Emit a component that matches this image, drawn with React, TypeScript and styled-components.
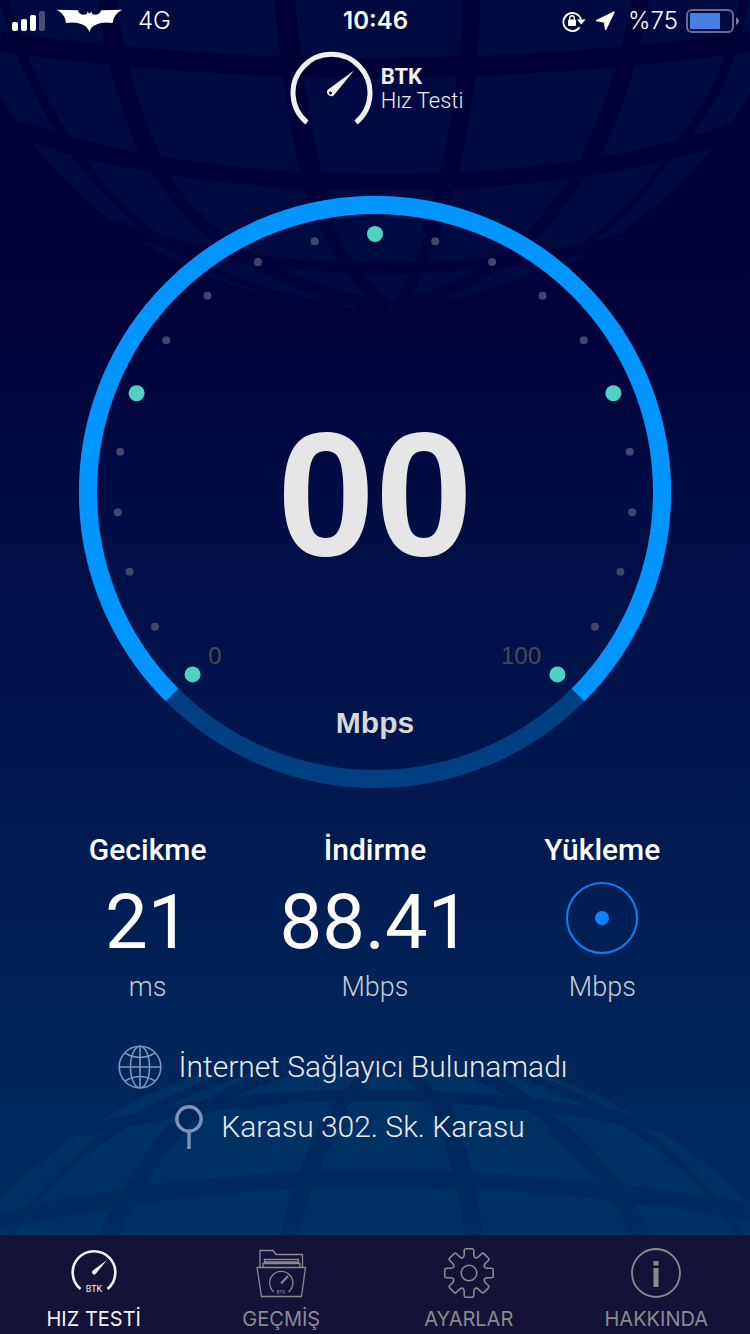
import React from "react";
import styled, { createGlobalStyle } from "styled-components";

const GlobalStyle = createGlobalStyle`
  * { box-sizing: border-box; }
  body {
    margin: 0;
    background: #000033;
    color: #fff;
    font-family: Roboto, "Liberation Sans", sans-serif;
  }
`;

const Page = styled.div`
  position: relative;
  display: flex;
  flex-direction: column;
  min-height: 100vh;
  overflow: hidden;
  background: linear-gradient(180deg, #000034 0%, #00023a 25%, #000e46 40%, #00194f 60%, #00265a 80%, #002e62 100%);
`;

const GlobeTop = styled.svg`
  position: absolute;
  top: 0;
  left: 50%;
  width: 750px;
  height: 320px;
  margin-left: -375px;
`;

const GlobeBottom = styled.svg`
  position: absolute;
  bottom: 99px;
  left: 50%;
  width: 750px;
  height: 195px;
  margin-left: -375px;
`;

const StatusBar = styled.header`
  position: relative;
  display: grid;
  grid-template-columns: 1fr auto 1fr;
  align-items: center;
  height: 42px;
  padding: 0 11px 0 12px;
  font-family: Inter, "Liberation Sans", sans-serif;
  font-size: 24px;
  line-height: 42px;
`;

const StatusGroup = styled.div<{ $end?: boolean }>`
  display: flex;
  align-items: center;
  justify-content: ${(p) => (p.$end ? "flex-end" : "flex-start")};
  gap: ${(p) => (p.$end ? "8px" : "12px")};
`;

const StatusText = styled.span`
  padding-left: 4px;
  font-weight: 300;
`;

const Clock = styled.time`
  font-weight: 600;
`;

const Brand = styled.div`
  position: relative;
  display: flex;
  justify-content: center;
  gap: 8px;
  margin-top: 9px;
  padding-left: 3px;
`;

const BrandName = styled.h1`
  display: flex;
  flex-direction: column;
  margin: 14px 0 0;
  font-size: 22px;
  line-height: 24px;
  font-weight: 300;
  color: #f0f0f0;
`;

const BrandStrong = styled.strong`
  font-weight: 700;
`;

const Main = styled.main`
  position: relative;
  flex: 1;
  display: flex;
  flex-direction: column;
`;

const Gauge = styled.section`
  display: grid;
  justify-items: center;
  width: calc(100% - 32px);
  max-width: 592px;
  margin: 69px auto 0;

  > * { grid-area: 1 / 1; }
`;

const Dial = styled.svg`
  width: 100%;
  height: auto;
`;

const Readout = styled.div`
  display: flex;
  flex-direction: column;
  align-items: center;
  align-self: end;
  gap: 132px;
  padding-bottom: 46px;
  font-family: "Liberation Sans Narrow", "Liberation Sans", sans-serif;
  font-weight: 700;
`;

const Speed = styled.output`
  font-size: 176px;
  line-height: 156px;
  color: #e6e6e6;
`;

const SpeedUnit = styled.span`
  font-size: 30px;
  line-height: 38px;
  color: #d8d8d8;
`;

const Metrics = styled.section`
  display: grid;
  grid-template-columns: repeat(3, 1fr);
  padding: 42px 34px 0;
`;

const Metric = styled.div`
  display: flex;
  flex-direction: column;
  align-items: center;
`;

const MetricLabel = styled.h2`
  margin: 0;
  font-size: 30px;
  line-height: 40px;
  font-weight: 500;
`;

const MetricValue = styled.div`
  display: flex;
  align-items: center;
  height: 80px;
  margin: 8px 0 11px;
`;

const Figure = styled.span`
  padding-top: 8px;
  font-size: 76px;
  line-height: 80px;
  font-weight: 400;
`;

const Pending = styled.span`
  display: grid;
  place-items: center;
  width: 72px;
  height: 72px;
  border: 2px solid #0a80ff;
  border-radius: 50%;

  &::after {
    content: "";
    width: 14px;
    height: 14px;
    border-radius: 50%;
    background: #0a84ff;
  }
`;

const MetricUnit = styled.span`
  font-size: 27px;
  line-height: 36px;
  font-weight: 300;
  color: #c8ccd2;
`;

const Details = styled.section`
  display: flex;
  flex-direction: column;
  align-items: center;
  gap: 16px;
  padding: 40px 64px 86px 0;
`;

const Detail = styled.p`
  display: flex;
  align-items: center;
  gap: 16px;
  margin: 0;
  font-size: 30px;
  line-height: 44px;
  font-weight: 300;
  color: #e8eaee;
`;

const TabBar = styled.nav`
  position: relative;
  display: grid;
  grid-template-columns: repeat(4, 1fr);
  border-top: 1px solid #10183c;
  background: #141238;
`;

const Tab = styled.button<{ $active?: boolean }>`
  display: flex;
  flex-direction: column;
  align-items: center;
  gap: 9px;
  padding: 12px 0 3px;
  border: 0;
  background: none;
  color: ${(p) => (p.$active ? "#f2f2f2" : "#8a8a8c")};
  font-family: Inter, "Liberation Sans", sans-serif;
  font-size: 20px;
  line-height: 24px;
  font-weight: 400;
  cursor: pointer;
`;

const TAU = Math.PI * 2;

const ticks = Array.from({ length: 21 }, (_, i) => {
  const angle = ((-135 + i * 13.5) / 360) * TAU;
  return {
    x: 296 + 258 * Math.sin(angle),
    y: 296 - 258 * Math.cos(angle),
    major: i % 5 === 0,
  };
});

const rotated = (x: number, y: number, a: number) =>
  `${(25 + x * Math.cos(a) - y * Math.sin(a)).toFixed(2)} ${(25 + x * Math.sin(a) + y * Math.cos(a)).toFixed(2)}`;

/* One tooth per eighth of a turn; corners and the valleys between teeth are rounded. */
const gearPath = Array.from({ length: 8 }, (_, k) => {
  const a = (k * TAU) / 8;
  const b = ((k + 1) * TAU) / 8;
  const p = (x: number, y: number) => rotated(x, y, a);
  return (
    `${k === 0 ? "M" : "L"}${p(-4.8, -18)} L${p(-4.8, -22.5)} Q${p(-4.8, -24.2)} ${p(-3.2, -24.2)}` +
    `L${p(3.2, -24.2)} Q${p(4.8, -24.2)} ${p(4.8, -22.5)} L${p(4.8, -18)}` +
    `C${p(5.2, -15)} ${rotated(-5.2, -15, b)} ${rotated(-4.8, -18, b)}`
  );
}).join("") + "Z";

function SpeedDial() {
  return (
    <Dial viewBox="0 0 592 592" aria-hidden="true">
      <circle cx="296" cy="296" r="287" fill="none" stroke="#003f82" strokeWidth="18" />
      <path d="M93 499 A287 287 0 1 1 499 499" fill="none" stroke="#0095ff" strokeWidth="18" />
      {ticks.map((t, i) => (
        <circle key={i} cx={t.x} cy={t.y} r={t.major ? 8 : 4} fill={t.major ? "#50d2c2" : "#41466a"} />
      ))}
      <g fill="#48484f" fontFamily="'Liberation Sans', sans-serif" fontSize="24" textAnchor="middle">
        <text x="136" y="468">0</text>
        <text x="442" y="468">100</text>
      </g>
    </Dial>
  );
}

export default function App() {
  return (
    <>
      <GlobalStyle />
      <Page>
        <GlobeTop viewBox="0 0 750 320" aria-hidden="true">
          <mask id="grid-top">
            <circle cx="374" cy="-126" r="435" fill="#fff" />
            <g fill="none" stroke="#000">
              <path strokeWidth="20" d="M0 42 Q375 94 750 42" />
              <path strokeWidth="17" d="M18 128 C200 200 560 200 735 130" />
              <path strokeWidth="11" d="M115 225 C240 280 500 280 620 238" />
              <path strokeWidth="21" d="M285 0 Q294 120 324 222" />
              <path strokeWidth="13" d="M321 210 Q340 268 388 308" />
              <path strokeWidth="18" d="M471 0 Q470 120 430 236" />
              <path strokeWidth="11" d="M434 224 Q418 282 396 308" />
              <path strokeWidth="19" d="M107 0 Q118 86 154 164" />
              <path strokeWidth="12" d="M150 155 Q210 274 388 308" />
              <path strokeWidth="18" d="M640 0 Q625 90 588 160" />
              <path strokeWidth="12" d="M591 152 Q530 274 396 308" />
              <path strokeWidth="9" d="M4 0 Q30 100 100 185" />
              <path strokeWidth="6" d="M96 180 Q190 290 345 306" />
              <path strokeWidth="9" d="M744 0 Q730 90 670 155" />
              <path strokeWidth="6" d="M673 151 Q590 280 430 306" />
            </g>
          </mask>
          <rect width="750" height="320" fill="#000a40" mask="url(#grid-top)" />
        </GlobeTop>
        <GlobeBottom viewBox="0 0 750 195" aria-hidden="true">
          <mask id="grid-bottom">
            <circle cx="372" cy="534" r="529" fill="#fff" />
            <rect width="750" height="34" fill="#000" />
            <g fill="none" stroke="#000">
              <path strokeWidth="12" d="M80 92 Q220 55 370 55 T670 88" />
              <path strokeWidth="17" d="M0 181 Q180 139 375 139 T750 172" />
              <path strokeWidth="12" d="M372 28 Q350 52 338 70" />
              <path strokeWidth="18" d="M340 66 Q308 120 289 196" />
              <path strokeWidth="11" d="M400 28 Q430 50 442 72" />
              <path strokeWidth="18" d="M441 66 Q464 120 474 196" />
              <path strokeWidth="12" d="M300 28 Q220 46 172 94" />
              <path strokeWidth="18" d="M176 88 Q140 130 108 196" />
              <path strokeWidth="12" d="M460 28 Q530 52 562 94" />
              <path strokeWidth="18" d="M557 87 Q616 140 641 196" />
              <path strokeWidth="8" d="M256 28 Q84 78 8 196" />
              <path strokeWidth="8" d="M500 28 Q668 78 740 196" />
            </g>
          </mask>
          <rect width="750" height="195" fill="#003163" mask="url(#grid-bottom)" />
        </GlobeBottom>

        <StatusBar>
          <StatusGroup>
            <svg width="33" height="20" viewBox="0 0 33 20" fill="#fff" role="img" aria-label="Sinyal">
              <rect y="11" width="6" height="9" rx="2" />
              <rect x="9" y="8" width="6" height="12" rx="2" />
              <rect x="18" y="4" width="6" height="16" rx="2" />
              <rect x="27" width="6" height="20" rx="2" opacity="0.28" />
            </svg>
            <svg width="65" height="24" viewBox="170 28 195 72" fill="#fff" aria-hidden="true">
              <path d="M170 30 L233 32 Q235 44 248 45 Q258 45 260 42 L262 35 L265 41 L270 41 L273 35 L275 42 Q277 45 287 45 Q300 44 302 32 L365 30 Q338 46 337 70 Q305 66 290 74 Q272 80 267 98 Q262 80 244 74 Q228 66 197 70 Q196 46 170 30Z" />
            </svg>
            <StatusText>4G</StatusText>
          </StatusGroup>
          <Clock>10:46</Clock>
          <StatusGroup $end>
            <svg width="24" height="22" viewBox="0 0 24 22" fill="#fff" aria-hidden="true">
              <path d="M17.6 17.4 A9 9 0 1 1 19 9.500" fill="none" stroke="#fff" strokeWidth="1.8" />
              <path d="M15 9.5 H23.600 L19.400 14.500Z" />
              <rect x="6" y="9.5" width="8" height="6.5" rx="1" />
              <path d="M7.7 10 V8 a2.3 2.3 0 0 1 4.6 0 V10" fill="none" stroke="#fff" strokeWidth="1.4" />
            </svg>
            <svg width="22" height="20" viewBox="0 0 22 20" fill="#fff" stroke="#fff" strokeLinejoin="round" aria-hidden="true">
              <path d="M20 1.2 L2.600 9.6 L10.6 11 L11.6 18.4Z" strokeWidth="1.4" />
            </svg>
            <StatusText>%75</StatusText>
            <svg width="53" height="24" viewBox="0 0 53 24" role="img" aria-label="Pil">
              <rect x="1" y="1" width="46" height="22" rx="5" fill="none" stroke="#6a6a8c" strokeWidth="2" />
              <rect x="4" y="4" width="30" height="16" rx="1" fill="#4880e2" />
              <path d="M50 8 Q53 10 53 12 T50 16Z" fill="#7b7b98" />
            </svg>
          </StatusGroup>
        </StatusBar>

        <Brand>
          <svg width="83" height="76" viewBox="0 0 83 76" fill="#f0f0f0" aria-hidden="true">
            <path d="M17 71.500 A38.500 38.500 0 1 1 66 71.500" fill="none" stroke="#f0f0f0" strokeWidth="5" />
            <path
              fillRule="evenodd"
              d="M64 19.500 L44.500 43.500 A4 4 0 1 1 38 38.500 Z M40 40.500 a1.500 1.500 0 1 0 1.800 2.200 a1.500 1.500 0 0 0 -1.800 -2.200Z"
            />
          </svg>
          <BrandName>
            <BrandStrong>BTK</BrandStrong>
            <span>Hız Testi</span>
          </BrandName>
        </Brand>

        <Main>
          <Gauge>
            <SpeedDial />
            <Readout>
              <Speed>00</Speed>
              <SpeedUnit>Mbps</SpeedUnit>
            </Readout>
          </Gauge>

          <Metrics>
            <Metric>
              <MetricLabel>Gecikme</MetricLabel>
              <MetricValue><Figure>21</Figure></MetricValue>
              <MetricUnit>ms</MetricUnit>
            </Metric>
            <Metric>
              <MetricLabel>İndirme</MetricLabel>
              <MetricValue><Figure>88.41</Figure></MetricValue>
              <MetricUnit>Mbps</MetricUnit>
            </Metric>
            <Metric>
              <MetricLabel>Yükleme</MetricLabel>
              <MetricValue><Pending /></MetricValue>
              <MetricUnit>Mbps</MetricUnit>
            </Metric>
          </Metrics>

          <Details>
            <Detail>
              <svg width="44" height="44" viewBox="0 0 44 44" fill="none" stroke="#8093b4" strokeWidth="1.6" aria-hidden="true">
                <circle cx="22" cy="22" r="20.8" />
                <ellipse cx="22" cy="22" rx="9.5" ry="20.8" />
                <path d="M22 1 V43 M1 22 H43 M7 8 Q22 17 37 8 M7 36 Q22 27 37 36" />
              </svg>
              İnternet Sağlayıcı Bulunamadı
            </Detail>
            <Detail>
              <svg width="44" height="44" viewBox="0 0 44 44" fill="none" stroke="#8093b4" strokeWidth="3.4" aria-hidden="true">
                <circle cx="28" cy="14" r="12.2" />
                <path d="M28 26 V44" />
              </svg>
              Karasu 302. Sk. Karasu
            </Detail>
          </Details>
        </Main>

        <TabBar>
          <Tab type="button" $active aria-current="page">
            <svg width="50" height="50" viewBox="0 0 50 50" fill="currentColor" aria-hidden="true">
              <path d="M11.5 41 A21.3 21.3 0 1 1 38.5 41" fill="none" stroke="currentColor" strokeWidth="2.6" />
              <path d="M38 12 L27 25.5 A2.2 2.2 0 1 1 23.5 22.8Z" />
              <text x="25" y="43.5" fontSize="9" fontWeight="400" fontFamily="Roboto, sans-serif" textAnchor="middle">BTK</text>
            </svg>
            HIZ TESTİ
          </Tab>
          <Tab type="button">
            <svg width="50" height="50" viewBox="0 0 50 50" fill="none" stroke="currentColor" strokeWidth="1.3" aria-hidden="true">
              <path d="M4 19 V2.5 H17 L20 6.5 H46.5 V19" />
              <path d="M8.5 14.5 V11.5 H42.5 V14.5 M8 14 H43 M7 19 V15.5 H44 V19" />
              <path d="M1 19.5 H49.5 L45.5 48.5 H5.5Z" />
              <path d="M18 44 A11.6 11.6 0 1 1 32.5 44" />
              <path d="M32 28 L25 35.5" strokeWidth="2" />
              <text x="25" y="45.5" fontSize="5" fill="currentColor" stroke="none" fontFamily="Roboto, sans-serif" textAnchor="middle">BTK</text>
            </svg>
            GEÇMİŞ
          </Tab>
          <Tab type="button">
            <svg width="50" height="50" viewBox="0 0 50 50" fill="none" stroke="currentColor" strokeWidth="1.6" strokeLinejoin="round" aria-hidden="true">
              <path d={gearPath} />
              <circle cx="25" cy="25" r="7.8" />
            </svg>
            AYARLAR
          </Tab>
          <Tab type="button">
            <svg width="50" height="50" viewBox="0 0 50 50" fill="currentColor" aria-hidden="true">
              <circle cx="25" cy="25" r="24" fill="none" stroke="currentColor" strokeWidth="1.8" />
              <rect x="22.5" y="13" width="5" height="4.5" />
              <rect x="22.5" y="20" width="5" height="19" />
            </svg>
            HAKKINDA
          </Tab>
        </TabBar>
      </Page>
    </>
  );
}
